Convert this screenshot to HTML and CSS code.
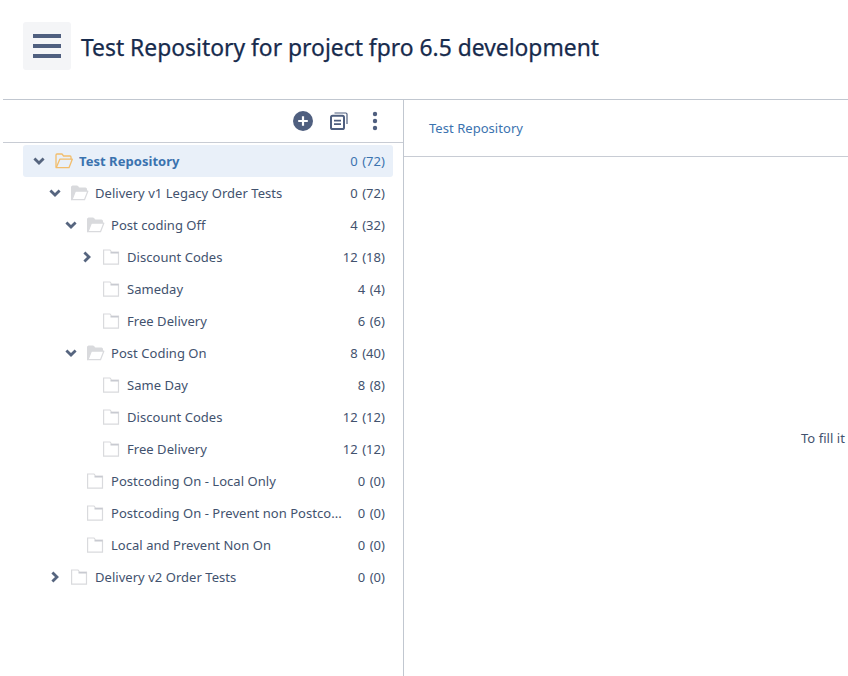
FILE: index.html
```html
<!DOCTYPE html>
<html lang="en">
<head>
<meta charset="utf-8">
<title>Test Repository</title>
<link rel="stylesheet" href="styles.css">
</head>
<body>
<svg width="0" height="0" class="defs">
  <defs>
    <symbol id="open" viewBox="0 0 18 16"><path d="M.5 15V2C.5 1.500.9 1 1.500 1h5l1.600 2h6.400c.6 0 1 .4 1 1v2.200H4.700L.9 15z" fill="currentColor" stroke="currentColor" stroke-width="1" stroke-linejoin="round"/><path d="M4.300 6.200H16.800L13.500 14.700H1z" fill="#fff" stroke="currentColor" stroke-width="1.200" stroke-linejoin="round"/></symbol>
    <symbol id="open-sel" viewBox="0 0 18 16"><path d="M1 14.500V2C1 1.500 1.400 1 2 1h5l1.600 2H15c.6 0 1 .4 1 1v2.200" fill="none" stroke="currentColor" stroke-width="1.300" stroke-linejoin="round"/><path d="M4.800 6.200H17.300L14 14.700H1.200z" fill="none" stroke="currentColor" stroke-width="1.300" stroke-linejoin="round"/></symbol>
    <symbol id="closed" viewBox="0 0 18 16"><path d="M.6 15.200V1H7l1.600 2.200h6.900v12z" fill="#fff" stroke="currentColor" stroke-width="1.200" stroke-linejoin="miter"/><path d="M7.500 3.800h8" stroke="#c6c8ce" stroke-width="1.400"/></symbol>
    <symbol id="down" viewBox="0 0 12 8"><path d="M1.400 1.400 6 6l4.600-4.600" fill="none" stroke="currentColor" stroke-width="2.800"/></symbol>
    <symbol id="right" viewBox="0 0 8 12"><path d="M1.400 1.400 6 6l-4.600 4.600" fill="none" stroke="currentColor" stroke-width="2.800"/></symbol>
  </defs>
</svg>
<div class="page">
  <header class="top">
    <button class="menu" aria-label="Menu">
      <span class="bar"></span><span class="bar"></span><span class="bar"></span>
    </button>
    <h1 class="title">Test Repository for project fpro 6.5 development</h1>
  </header>
  <main class="split">
    <section class="left">
      <div class="tools">
        <svg class="t-add" width="20" height="20" viewBox="0 0 20 20"><circle cx="10" cy="10" r="10" fill="#4f5f7f"/><path d="M10 5.200v9.600M5.200 10h9.600" stroke="#fff" stroke-width="2.200"/></svg>
        <svg class="t-copy" width="18" height="18" viewBox="0 0 18 18" fill="none" stroke="#4f5f7f"><path d="M4.500 1h11.300c.7 0 1.200.5 1.200 1.200V12" stroke-width="1.200"/><rect x="1" y="3.800" width="13" height="13.200" rx="1.600" stroke-width="2"/><path d="M4 8.600h7M4 12.200h7" stroke-width="1.800"/></svg>
        <svg class="t-more" width="6" height="20" viewBox="0 0 6 20" fill="#4f5f7f"><circle cx="3" cy="3" r="2.200"/><circle cx="3" cy="10" r="2.200"/><circle cx="3" cy="17" r="2.200"/></svg>
      </div>
      <ul class="tree">
        <li class="row sel l0"><svg class="tw"><use href="#down"/></svg><svg class="fo f-sel"><use href="#open-sel"/></svg><span class="name">Test Repository</span><span class="num">0 (72)</span></li>
        <li class="row l1"><svg class="tw"><use href="#down"/></svg><svg class="fo"><use href="#open"/></svg><span class="name">Delivery v1 Legacy Order Tests</span><span class="num">0 (72)</span></li>
        <li class="row l2"><svg class="tw"><use href="#down"/></svg><svg class="fo"><use href="#open"/></svg><span class="name">Post coding Off</span><span class="num">4 (32)</span></li>
        <li class="row l3"><svg class="tw tw-r"><use href="#right"/></svg><svg class="fo"><use href="#closed"/></svg><span class="name">Discount Codes</span><span class="num">12 (18)</span></li>
        <li class="row l3"><span class="tw"></span><svg class="fo"><use href="#closed"/></svg><span class="name">Sameday</span><span class="num">4 (4)</span></li>
        <li class="row l3"><span class="tw"></span><svg class="fo"><use href="#closed"/></svg><span class="name">Free Delivery</span><span class="num">6 (6)</span></li>
        <li class="row l2"><svg class="tw"><use href="#down"/></svg><svg class="fo"><use href="#open"/></svg><span class="name">Post Coding On</span><span class="num">8 (40)</span></li>
        <li class="row l3"><span class="tw"></span><svg class="fo"><use href="#closed"/></svg><span class="name">Same Day</span><span class="num">8 (8)</span></li>
        <li class="row l3"><span class="tw"></span><svg class="fo"><use href="#closed"/></svg><span class="name">Discount Codes</span><span class="num">12 (12)</span></li>
        <li class="row l3"><span class="tw"></span><svg class="fo"><use href="#closed"/></svg><span class="name">Free Delivery</span><span class="num">12 (12)</span></li>
        <li class="row l2"><span class="tw"></span><svg class="fo"><use href="#closed"/></svg><span class="name">Postcoding On - Local Only</span><span class="num">0 (0)</span></li>
        <li class="row l2"><span class="tw"></span><svg class="fo"><use href="#closed"/></svg><span class="name">Postcoding On - Prevent non Postco...</span><span class="num">0 (0)</span></li>
        <li class="row l2"><span class="tw"></span><svg class="fo"><use href="#closed"/></svg><span class="name">Local and Prevent Non On</span><span class="num">0 (0)</span></li>
        <li class="row l1"><svg class="tw tw-r"><use href="#right"/></svg><svg class="fo"><use href="#closed"/></svg><span class="name">Delivery v2 Order Tests</span><span class="num">0 (0)</span></li>
      </ul>
    </section>
    <section class="right">
      <div class="crumb"><a class="crumb-link">Test Repository</a></div>
      <div class="empty"><p class="empty-text">To fill it</p></div>
    </section>
  </main>
</div>
</body>
</html>
```

FILE: styles.css
```css
* { box-sizing: border-box; }
html, body { margin: 0; padding: 0; height: 100%; overflow: hidden; background: #fff; }
body { font-family: "Noto Sans", "Open Sans", sans-serif; font-size: 13px; letter-spacing: .04px; color: #42526e; }
.defs { position: absolute; }
.page { width: 848px; height: 676px; display: flex; flex-direction: column; overflow: hidden; }

.top { height: 99px; display: flex; align-items: flex-start; gap: 10px; padding: 22px 0 0 23px; flex: none; }
.menu { width: 48px; height: 48px; background: #f4f5f7; border: 0; border-radius: 3px; padding: 0; display: flex; flex-direction: column; align-items: center; justify-content: center; gap: 6px; }
.bar { width: 28px; height: 4px; background: #4f5f7f; display: block; }
.title { margin: 10px 0 0; font-size: 22.85px; font-weight: 400; letter-spacing: 0; line-height: 32px; color: #172b4d; -webkit-text-stroke: .25px #172b4d; }

.split { flex: 1; min-height: 0; margin-left: 3px; border-top: 1px solid #c1c7d0; display: flex; }
.left { width: 401px; flex: none; border-right: 1px solid #c1c7d0; }
.tools { height: 43px; border-bottom: 1px solid #c8ccd4; display: flex; align-items: center; justify-content: flex-end; padding: 0 25px 0 0; }
.t-add { margin-right: 17px; }
.t-copy { margin-right: 24px; }

.tree { list-style: none; margin: 2px 0 0; padding: 0 10px 0 20px; }
.row { height: 32px; display: flex; align-items: center; padding-right: 8px; line-height: 20px; white-space: nowrap; }
.l0 { padding-left: 10px; }
.l1 { padding-left: 26px; }
.l2 { padding-left: 42px; }
.l3 { padding-left: 58px; }
.sel { background: #e9f0f9; border-radius: 3px; color: #3b73af; }
.tw { width: 12px; height: 8px; flex: none; color: #56657f; display: block; margin-right: 10px; }
.tw-r { width: 8px; height: 12px; margin: 0 12px 0 2px; }
.fo { width: 18px; height: 16px; flex: none; color: #d9dadd; margin: 0 6px 0 0; }
.f-sel { color: #f2bd6c; }
.name { flex: 1; min-width: 0; overflow: hidden; }
.sel .name { font-weight: 700; }
.num { flex: none; margin-left: 12px; word-spacing: 1px; }

.right { flex: 1; min-width: 0; overflow: hidden; display: flex; flex-direction: column; }
.crumb { height: 57px; border-bottom: 1px solid #c8ccd4; padding: 18px 0 0 25px; line-height: 20px; flex: none; }
.crumb-link { color: #3b73af; }
.empty { flex: 1; display: flex; align-items: flex-start; padding: 271px 0 0 397px; }
.empty-text { margin: 0; white-space: nowrap; line-height: 20px; }
```
